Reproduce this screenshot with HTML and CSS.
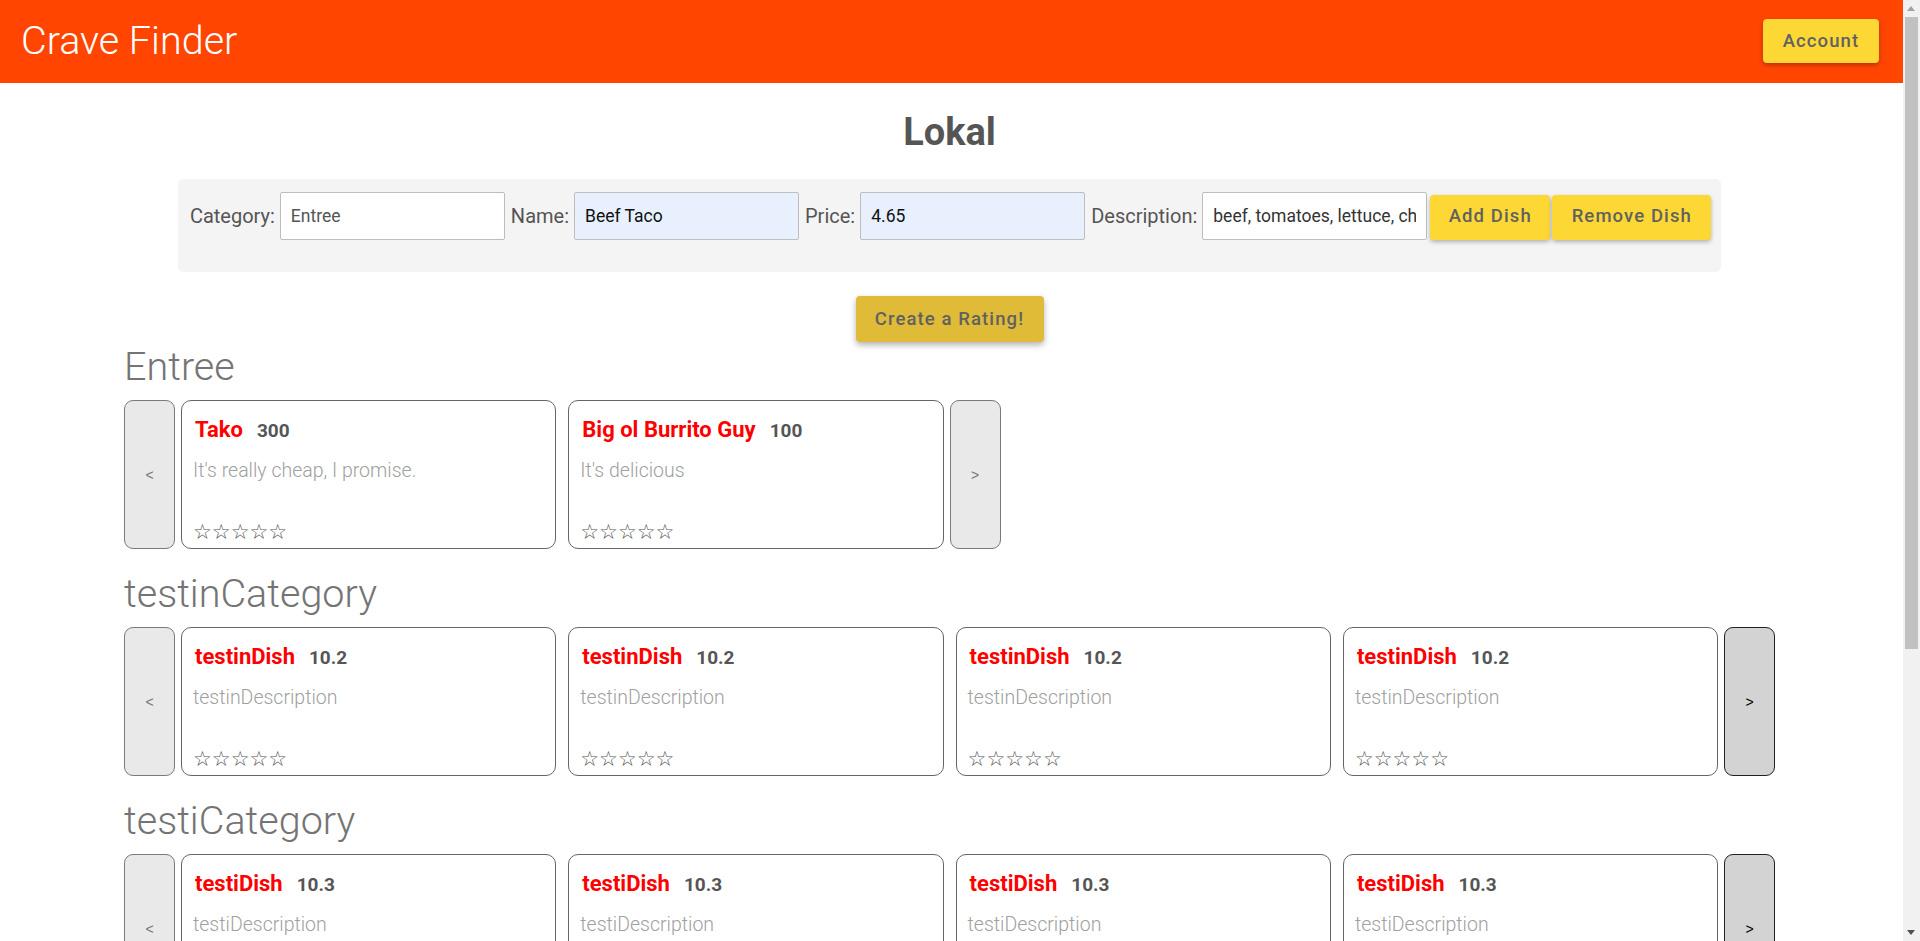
FILE: index.html
```html
<!DOCTYPE html>
<html lang="en">
<head>
<meta charset="utf-8">
<title>Crave Finder</title>
<link rel="stylesheet" href="styles.css">
</head>
<body>
<header class="topbar">
  <div class="brand">Crave Finder</div>
  <button class="btn btn-account" type="button">Account</button>
</header>
<main class="page">
  <h1 class="restaurant">Lokal</h1>
  <form class="dish-form">
    <label class="field-label">Category:</label>
    <input class="field field-plain" type="text" value="Entree">
    <label class="field-label">Name:</label>
    <input class="field field-filled" type="text" value="Beef Taco">
    <label class="field-label">Price:</label>
    <input class="field field-filled" type="text" value="4.65">
    <label class="field-label">Description:</label>
    <input class="field field-dark" type="text" value="beef, tomatoes, lettuce, cheese">
    <button class="btn btn-form btn-add" type="button">Add Dish</button>
    <button class="btn btn-form btn-remove" type="button">Remove Dish</button>
  </form>
  <div class="rating-wrap">
    <button class="btn btn-rating" type="button">Create a Rating!</button>
  </div>

  <section class="category">
    <h2 class="category-title">Entree</h2>
    <div class="carousel">
      <button class="nav nav-off" type="button">&lt;</button>
      <div class="card">
        <div class="card-head"><span class="dish-name">Tako</span><span class="dish-price">300</span></div>
        <div class="dish-desc">It's really cheap, I promise.</div>
        <div class="stars">☆☆☆☆☆</div>
      </div>
      <div class="card">
        <div class="card-head"><span class="dish-name">Big ol Burrito Guy</span><span class="dish-price">100</span></div>
        <div class="dish-desc">It's delicious</div>
        <div class="stars">☆☆☆☆☆</div>
      </div>
      <button class="nav nav-off" type="button">&gt;</button>
    </div>
  </section>

  <section class="category">
    <h2 class="category-title">testinCategory</h2>
    <div class="carousel">
      <button class="nav nav-off" type="button">&lt;</button>
      <div class="card">
        <div class="card-head"><span class="dish-name">testinDish</span><span class="dish-price">10.2</span></div>
        <div class="dish-desc">testinDescription</div>
        <div class="stars">☆☆☆☆☆</div>
      </div>
      <div class="card">
        <div class="card-head"><span class="dish-name">testinDish</span><span class="dish-price">10.2</span></div>
        <div class="dish-desc">testinDescription</div>
        <div class="stars">☆☆☆☆☆</div>
      </div>
      <div class="card">
        <div class="card-head"><span class="dish-name">testinDish</span><span class="dish-price">10.2</span></div>
        <div class="dish-desc">testinDescription</div>
        <div class="stars">☆☆☆☆☆</div>
      </div>
      <div class="card">
        <div class="card-head"><span class="dish-name">testinDish</span><span class="dish-price">10.2</span></div>
        <div class="dish-desc">testinDescription</div>
        <div class="stars">☆☆☆☆☆</div>
      </div>
      <button class="nav nav-on" type="button">&gt;</button>
    </div>
  </section>

  <section class="category">
    <h2 class="category-title">testiCategory</h2>
    <div class="carousel">
      <button class="nav nav-off" type="button">&lt;</button>
      <div class="card">
        <div class="card-head"><span class="dish-name">testiDish</span><span class="dish-price">10.3</span></div>
        <div class="dish-desc">testiDescription</div>
        <div class="stars">☆☆☆☆☆</div>
      </div>
      <div class="card">
        <div class="card-head"><span class="dish-name">testiDish</span><span class="dish-price">10.3</span></div>
        <div class="dish-desc">testiDescription</div>
        <div class="stars">☆☆☆☆☆</div>
      </div>
      <div class="card">
        <div class="card-head"><span class="dish-name">testiDish</span><span class="dish-price">10.3</span></div>
        <div class="dish-desc">testiDescription</div>
        <div class="stars">☆☆☆☆☆</div>
      </div>
      <div class="card">
        <div class="card-head"><span class="dish-name">testiDish</span><span class="dish-price">10.3</span></div>
        <div class="dish-desc">testiDescription</div>
        <div class="stars">☆☆☆☆☆</div>
      </div>
      <button class="nav nav-on" type="button">&gt;</button>
    </div>
  </section>
</main>
<div class="scrollbar" aria-hidden="true">
  <span class="scroll-arrow scroll-up"></span>
  <span class="scroll-thumb"></span>
  <span class="scroll-arrow scroll-down"></span>
</div>
</body>
</html>
```

FILE: styles.css
```css
* {
  box-sizing: border-box;
}

html, body {
  margin: 0;
  padding: 0;
  background: #ffffff;
  font-family: Roboto, "Liberation Sans", Arial, sans-serif;
}

body {
  margin-right: 17px;
}

.topbar {
  height: 83px;
  background: #ff4500;
  display: flex;
  align-items: center;
  justify-content: space-between;
  padding: 0 24px 0 21px;
}

.brand {
  color: #ffffff;
  font-family: "Roboto Light", Roboto, "Liberation Sans", sans-serif;
  font-weight: 300;
  font-variation-settings: "wght" 300;
  font-size: 39.5px;
  line-height: 1;
  margin-top: -2px;
}

.btn {
  font-family: Roboto, "Liberation Sans", Arial, sans-serif;
  font-weight: 500;
  color: #616161;
  border: none;
  border-radius: 4px;
  background: #fdd835;
  letter-spacing: 1.1px;
  cursor: pointer;
  box-shadow: 0 2px 4px rgba(0, 0, 0, 0.28);
  padding: 0;
}

.btn-account {
  width: 116px;
  height: 44px;
  font-size: 18.5px;
  margin-top: -2px;
}

.page {
  padding-right: 4px;
  padding-bottom: 40px;
}

.restaurant {
  margin: 27px 0 24px;
  text-align: center;
  font-size: 38px;
  line-height: 45px;
  font-weight: 700;
  color: #555555;
}

.dish-form {
  width: 80%;
  box-sizing: content-box;
  margin: 0 auto;
  padding: 13px 12px 32px;
  background: #f4f4f4;
  border-radius: 5px;
  display: flex;
  align-items: center;
}

.field-label {
  font-size: 20px;
  color: #555555;
  margin: 0 5px 0 6px;
  white-space: nowrap;
}

.field-label:first-child {
  margin-left: 0;
}

.field {
  width: 225px;
  height: 48px;
  flex: none;
  border: 1px solid #bdbdbd;
  border-radius: 2px;
  padding: 0 10px;
  font-family: Roboto, "Liberation Sans", Arial, sans-serif;
  font-size: 17.5px;
  outline: none;
}

.field-plain {
  background: #ffffff;
  color: #555555;
}

.field-filled {
  background: #e8f0fe;
  color: #111111;
}

.field-dark {
  background: #ffffff;
  color: #333333;
}

.btn-form {
  height: 45px;
  font-size: 18.5px;
  flex: none;
  margin-top: 3px;
  padding-bottom: 3px;
}

.btn-add {
  width: 120px;
  margin-left: 3px;
}

.btn-remove {
  width: 159px;
  margin-left: 2px;
}

.rating-wrap {
  display: flex;
  justify-content: center;
  margin-top: 24px;
}

.btn-rating {
  width: 188px;
  height: 46px;
  font-size: 18.5px;
  background: #dfbb38;
  box-shadow: 0 3px 6px rgba(0, 0, 0, 0.3);
}

.category {
  padding: 0 124px;
  margin-bottom: 20px;
}

.category-title {
  margin: 0;
  font-family: "Roboto Light", Roboto, "Liberation Sans", sans-serif;
  font-size: 39.5px;
  line-height: 49px;
  font-weight: 300;
  font-variation-settings: "wght" 300;
  color: #747474;
}

.carousel {
  display: flex;
  margin-top: 9px;
  height: 149px;
}

.nav {
  width: 51px;
  flex: none;
  border-radius: 9px;
  font-family: "Liberation Sans", Arial, sans-serif;
  font-size: 14px;
  padding: 0;
}

.nav-off {
  background: #e9e9e9;
  border: 1px solid #7a7a7a;
  color: #777777;
}

.nav-on {
  background: #d3d3d3;
  border: 1px solid #222222;
  color: #000000;
}

.card {
  width: 375.3px;
  flex: none;
  margin: 0 6px;
  border: 1px solid #666666;
  border-radius: 10px;
  padding: 16px 11px 4px;
  display: flex;
  flex-direction: column;
  background: #ffffff;
}

.card-head {
  display: flex;
  align-items: baseline;
  padding-left: 2px;
}

.dish-name {
  color: #ff0000;
  font-weight: 700;
  font-size: 22px;
}

.dish-price {
  color: #555555;
  font-weight: 700;
  font-size: 19px;
  margin-left: 14px;
}

.dish-desc {
  margin-top: 17px;
  font-family: "Roboto Light", Roboto, "Liberation Sans", sans-serif;
  font-size: 19.5px;
  font-weight: 300;
  font-variation-settings: "wght" 300;
  color: #a0a0a0;
}

.stars {
  margin-top: auto;
  font-family: "DejaVu Sans", sans-serif;
  font-size: 21px;
  color: #555555;
  line-height: normal;
}

.scrollbar {
  position: fixed;
  top: 0;
  right: 0;
  width: 17px;
  height: 100vh;
  background: #f1f1f1;
}

.scroll-thumb {
  position: absolute;
  left: 2px;
  right: 2px;
  top: 17px;
  height: 632px;
  background: #c1c1c1;
}

.scroll-arrow {
  position: absolute;
  left: 4px;
  width: 0;
  height: 0;
  border-left: 4.5px solid transparent;
  border-right: 4.5px solid transparent;
}

.scroll-up {
  top: 6px;
  border-bottom: 5px solid #a3a3a3;
}

.scroll-down {
  bottom: 6px;
  border-top: 5px solid #505050;
}
```
